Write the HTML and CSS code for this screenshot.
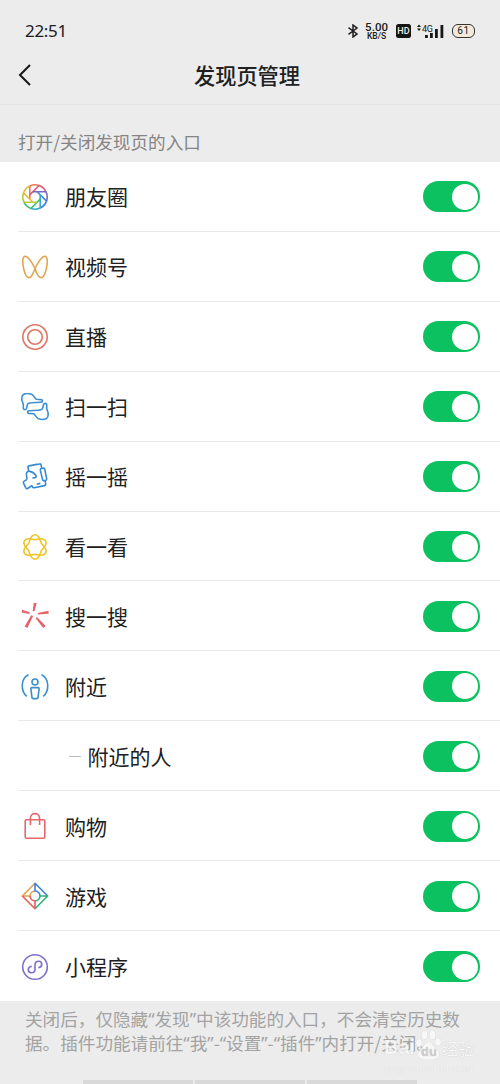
FILE: index.html
```html
<!DOCTYPE html>
<html lang="zh-CN">
<head>
<meta charset="utf-8">
<title>发现页管理</title>
<link rel="stylesheet" href="styles.css">
</head>
<body>
<div class="screen">
  <header class="status">
    <span class="time">22:51</span>
    <div class="indicators">
      <svg class="bt" width="12" height="14" viewBox="0 0 12 14"><path d="M1.500 3.700 10 9.900 6 13V1l4 3.100-8.500 6.200"/></svg>
      <div class="speed"><b>5.00</b><span>KB/S</span></div>
      <span class="hd">HD</span>
      <svg class="signal" width="27" height="16" viewBox="0 0 27 16"><path d="M0 4 2 1.500 4 4zM0 5.500 2 8l2-2.500z"/><rect x="8" y="12" width="2.800" height="3"/><rect x="13" y="10" width="2.800" height="5"/><rect x="18" y="6" width="2.800" height="9"/><rect x="23.500" y="2" width="2.800" height="13"/><text x="5" y="8.500">4G</text></svg>
      <span class="battery">61</span>
    </div>
  </header>
  <nav class="navbar">
    <svg class="back" width="14" height="22" viewBox="0 0 14 22"><path d="M12 1 2 11l10 10"/></svg>
    <h1>发现页管理</h1>
  </nav>
  <p class="caption">打开/关闭发现页的入口</p>
  <main class="list">
    <div class="row">
      <svg class="icon" viewBox="0 0 28 28"><defs><path id="blade" d="M8.800 16.200V2.960A12.200 12.200 0 0 1 18.130 2.520"/></defs><use href="#blade" stroke="#ea7a4c"/><use href="#blade" stroke="#d65c78" transform="rotate(45 14 14)"/><use href="#blade" stroke="#7a68c6" transform="rotate(90 14 14)"/><use href="#blade" stroke="#3f83df" transform="rotate(135 14 14)"/><use href="#blade" stroke="#35abd0" transform="rotate(180 14 14)"/><use href="#blade" stroke="#3fbd75" transform="rotate(225 14 14)"/><use href="#blade" stroke="#b2cb3a" transform="rotate(270 14 14)"/><use href="#blade" stroke="#efb940" transform="rotate(315 14 14)"/></svg>
      <span class="label">朋友圈</span><i class="switch"></i>
    </div>
    <div class="row">
      <svg class="icon" viewBox="0 0 28 28"><path stroke="#dfa650" d="M14 15.500C11.500 10.500 8 4 4.500 3.300 1 3 1.300 10 2.700 16c1.300 5.500 3 8.700 5.100 8.700 2.800 0 4.700-4.700 6.200-9.200 2.500-5 6-11.500 9.500-12.200 3.500-.3 3.200 6.700 1.800 12.700-1.300 5.500-3 8.700-5.100 8.700-2.800 0-4.700-4.700-6.200-9.200z"/></svg>
      <span class="label">视频号</span><i class="switch"></i>
    </div>
    <div class="row">
      <svg class="icon" viewBox="0 0 28 28"><g stroke="#df7663"><circle cx="14" cy="14" r="12.200"/><circle cx="14" cy="14" r="7.300"/></g></svg>
      <span class="label">直播</span><i class="switch"></i>
    </div>
    <div class="row">
      <svg class="icon" viewBox="0 0 28 28"><defs><path id="hand" d="M2.300 15.500V11.300L1 7.500C.5 4.500 1 2.500 2.500 1.500c1.700-.9 5.800-1 8-.2C13 2.300 13.500 5 15.300 6.300l4.900.3c1.700.2 1.700 2.500 0 2.600l-9.700.6c-2.500 0-4 .8-4.300 2.500l-.7 3.200c-.5 1.500-3 1.500-3.200 0z"/></defs><g stroke="#3c8fd0"><use href="#hand"/><use href="#hand" transform="rotate(180 14 13.500)"/></g></svg>
      <span class="label">扫一扫</span><i class="switch"></i>
    </div>
    <div class="row">
      <svg class="icon" viewBox="0 0 28 28"><g stroke="#368bd0"><path d="M7.800 8.700 7 4.500c-.2-.9.200-1.400 1-1.600L18.500.9c.9-.2 1.400.2 1.600 1l.7 3.400M24.100 17.700l.6 3.200c.2.900-.2 1.500-1.100 1.700l-10.400 2.100c-1 .2-1.500-.1-1.800-1l-.4-1.200"/><path d="m20.200 5.500 1.900-.3c.9-.2 1.400.2 1.600 1l2 9.600c.1.800-.2 1.300-1 1.500l-1.500.3c-.8.200-1.400-.1-1.600-1L19.300 7.100c-.2-.9.100-1.400.9-1.600z"/><path d="M6 16.300 5.400 11c0-1.700 1.200-3.100 3.400-2.600 2.800.5 4.800 2 6.300 4.500.3.900-.2 1.500-1.100 1.700l-2.600.4M6 16.300l-2.800 1.800c-.8.500-1 1.200-.7 2l2.300 4.800c.4.800 1 1 1.800.6l4.400-3"/><path d="m15.700 21.300 3.600-.9"/></g></svg>
      <span class="label">摇一摇</span><i class="switch"></i>
    </div>
    <div class="row">
      <svg class="icon" viewBox="0 0 28 28"><defs><path id="braid" d="M14 1.700C18.800 1.700 19.100 8.100 20.400 10.300 21.700 12.500 27 16 24.600 20.100 22.200 24.300 16.500 21.400 14 21.400S5.800 24.300 3.400 20.100C1 16 6.300 12.500 7.600 10.300 8.900 8.100 9.200 1.700 14 1.700z"/></defs><g stroke="#edc526"><use href="#braid"/><use href="#braid" transform="rotate(180 14 14)"/></g></svg>
      <span class="label">看一看</span><i class="switch"></i>
    </div>
    <div class="row">
      <svg class="icon" viewBox="0 0 28 28"><g fill="#e56469"><path d="m12.800.7 2.900.6-2.200 8-1.800-.4zM.6 10.500l.6-2.800 7.600 2.600-.4 1.800zM16.800 11l10.600-2.200.3 2.900-10.700.9zM16 15l8.700 9-2.500 2-7.500-9.800zM10.200 13.300l1.900.8-5.700 12-2.800-1.500z"/></g></svg>
      <span class="label">搜一搜</span><i class="switch"></i>
    </div>
    <div class="row">
      <svg class="icon" viewBox="0 0 28 28"><g stroke="#3b8fcb"><path d="M7.500 2.800C-.5 6.500-.5 19 5.800 24.400M20.500 2.800C28.500 6.500 28.500 19 22.200 24.400"/><circle cx="14" cy="10" r="3"/><path d="M11 15.600h6c.8 0 1.200.4 1.100 1.200L17 25.600c-.1.700-.5 1-1.100 1h-3.800c-.6 0-1-.3-1.100-1L9.900 16.800c-.1-.8.300-1.200 1.100-1.200z"/></g></svg>
      <span class="label">附近</span><i class="switch"></i>
    </div>
    <div class="row sub">
      <span class="dash"></span>
      <span class="label">附近的人</span><i class="switch"></i>
    </div>
    <div class="row">
      <svg class="icon" viewBox="0 0 28 28"><g stroke="#e4696a"><rect x="4.200" y="7.800" width="19.600" height="18.400" rx="1.300"/><path d="M9.400 13V6.300c0-6.300 9.200-6.300 9.200 0V13"/></g></svg>
      <span class="label">购物</span><i class="switch"></i>
    </div>
    <div class="row">
      <svg class="icon" viewBox="0 0 28 28"><path stroke="#e9a04c" d="M14 1.300 1.300 14H9a5 5 0 0 1 5-5"/><path stroke="#3f80dd" d="M26.700 14 14 1.300V9a5 5 0 0 1 5 5"/><path stroke="#32b27b" d="M14 26.700 26.700 14H19a5 5 0 0 1-5 5"/><path stroke="#e45e57" d="M1.300 14 14 26.700V19a5 5 0 0 1-5-5"/></svg>
      <span class="label">游戏</span><i class="switch"></i>
    </div>
    <div class="row">
      <svg class="icon" viewBox="0 0 28 28"><g stroke="#7d70cb"><circle cx="14" cy="14" r="12.300"/><path d="M10.700 13.200c-4.700.9-4.300 6.600-.4 6.600 2.300 0 3.700-1.500 3.700-3.600v-4.400c0-2.100 1.400-3.600 3.700-3.600 3.900 0 4.300 5.700-.4 6.600"/></g></svg>
      <span class="label">小程序</span><i class="switch"></i>
    </div>
  </main>
  <footer class="note">
    <p>关闭后，仅隐藏<q>“</q>发现<q>”</q>中该功能的入口，不会清空历史数<br>据。插件功能请前往<q>“</q>我<q>”</q>-<q>“</q>设置<q>”</q>-<q>“</q>插件<q>”</q>内打开/关闭。</p>
    <div class="mark"><div class="brand"><span>Bai</span><svg width="27" height="30" viewBox="0 0 27 30"><ellipse cx="4" cy="13" rx="3" ry="4"/><ellipse cx="9.500" cy="5" rx="3.200" ry="4.300"/><ellipse cx="17.500" cy="5" rx="3.200" ry="4.300"/><ellipse cx="23" cy="12" rx="3" ry="4"/><path d="M13.500 12c4 0 5 5 9 8 4 4 1.500 9-3 9H8c-5 0-7-5-3-9 4-3 4.500-8 8.500-8z"/><text x="6" y="26">du</text></svg><em>经验</em></div><small>jingyan.baidu.com</small></div>
    <div class="dock"><i></i><i></i><i></i></div>
  </footer>
</div>
</body>
</html>
```
FILE: styles.css
```css
* { box-sizing: border-box; }
body { margin: 0; background: #ececec; color: #202020; font-family: "Noto Sans CJK SC", sans-serif; }
.screen { width: 500px; height: 1084px; display: flex; flex-direction: column; overflow: hidden; }
svg { flex: none; fill: none; }

.status { height: 50px; padding: 11px 25px 0; display: flex; justify-content: space-between; align-items: flex-start; }
.time { font: 17px/40px "Noto Sans", sans-serif; letter-spacing: -.3px; }
.indicators { height: 40px; display: flex; align-items: center; font-family: Roboto, sans-serif; }
.bt { stroke: #202020; stroke-width: 1.5; margin-right: 6px; }
.speed { width: 23px; margin-right: 8px; text-align: center; }
.speed b { display: block; font-size: 11.500px; line-height: 10px; font-weight: 500; letter-spacing: .1px; }
.speed span { display: block; font-size: 8.500px; line-height: 8px; font-weight: 500; }
.hd { width: 15px; height: 14px; margin-right: 6px; border-radius: 2.500px; background: #151515; color: #eee; font-size: 9px; font-weight: 500; line-height: 14px; text-align: center; }
.signal { fill: #181818; margin-right: 8px; }
.signal text { font-size: 9px; letter-spacing: -.4px; }
.battery { width: 23px; height: 14px; border: 1.500px solid #333; border-radius: 6px; background: #f3eadb; font-size: 10px; line-height: 11.500px; text-align: center; letter-spacing: .6px; }

.navbar { height: 55px; padding: 0 18px; display: grid; grid-template-columns: 40px 1fr 46px; align-items: center; border-bottom: 1px solid #e5e5e5; }
.back { stroke: #181818; stroke-width: 2; margin-top: -4px; }
h1 { margin: -5px 0 0; font-size: 21.200px; font-weight: 500; line-height: 30px; text-align: center; }
.caption { height: 57px; margin: 0; padding: 24px 18px 0; font-size: 17.600px; line-height: 26px; color: #858585; }

.list { height: 839px; flex: none; background: #fff; display: grid; grid-template-rows: repeat(12, 1fr); }
.row { margin-left: 18px; padding: 1px 20px 0 3px; display: flex; align-items: center; border-bottom: 1px solid #e9e9e9; }
.row:last-child { border-bottom: 0; }
.icon { width: 28px; height: 28px; margin-right: 16px; stroke-width: 1.600; stroke-linejoin: round; }
.label { flex: 1; padding-bottom: 1px; font-size: 21px; line-height: 30px; }
.sub { padding-left: 51px; }
.dash { width: 12px; height: 1.500px; margin-right: 6.500px; background: #bbb; }
.switch { width: 57px; height: 31px; padding: 2.500px; border-radius: 16px; background: #0bc160; display: flex; justify-content: flex-end; }
.switch::after { content: ""; width: 26px; height: 26px; border-radius: 50%; background: #fff; }

.note { flex: 1; display: flex; flex-direction: column; justify-content: space-between; position: relative; color: #a3a3a3; }
.note p { margin: 0; padding: 6px 0 0 25px; font-size: 17.600px; line-height: 23px; white-space: nowrap; }
.note q { quotes: none; font-family: "Noto Sans", sans-serif; }
.note q::before, .note q::after { content: none; }
.dock { width: 334px; margin-left: 83px; height: 4px; display: flex; gap: 2px; }
.dock i { flex: 1; background: #d9d9d9; }
.mark { position: absolute; left: 384px; top: 29px; opacity: .8; color: #fafafa; font-family: "Liberation Sans", sans-serif; text-shadow: 0 0 1px #aaa; }
.brand { display: flex; align-items: flex-end; height: 30px; }
.brand span { font-size: 20px; font-weight: 700; line-height: 26px; width: 31px; }
.brand svg { fill: #fafafa; filter: drop-shadow(0 0 .7px #aaa); }
.brand text { font-size: 13px; font-weight: 700; fill: #c8c8c8; }
.brand em { font: 16px/24px "Noto Sans CJK SC", sans-serif; }
.mark small { display: block; margin-top: 1px; font-size: 11px; line-height: 14px; color: #f2f2f2; text-shadow: 0 0 1px #ccc; }
```
